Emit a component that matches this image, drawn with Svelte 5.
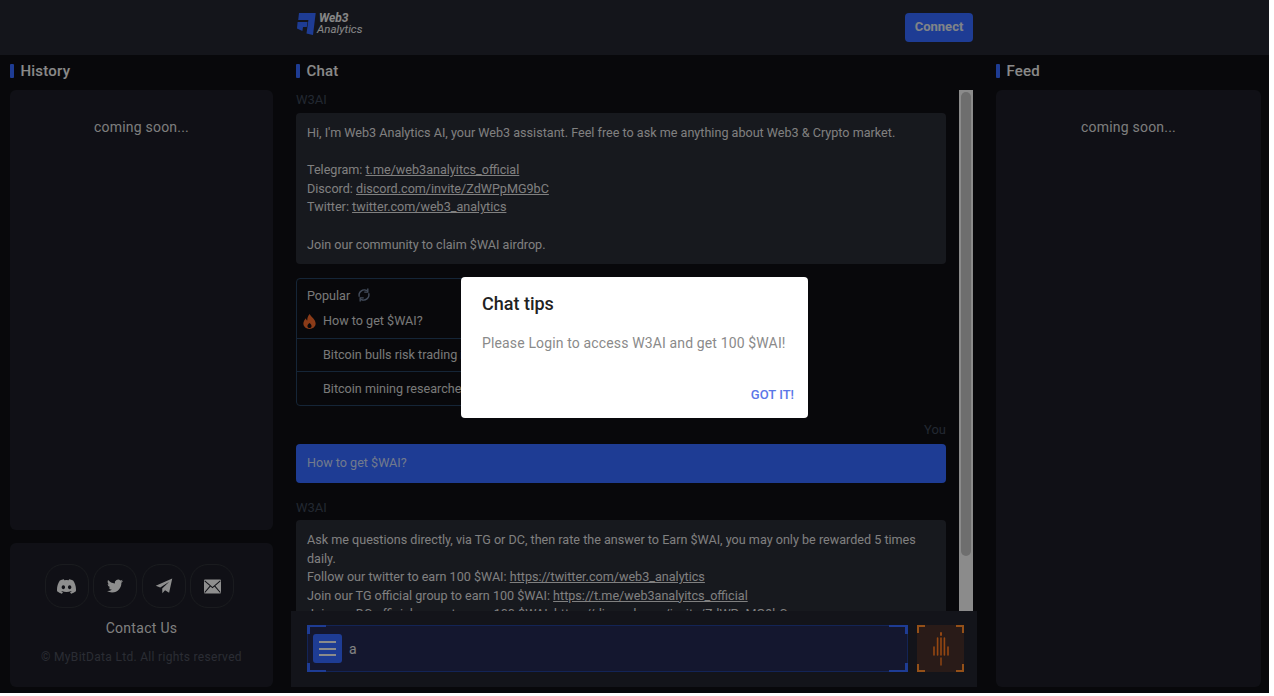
<script lang="ts">
	const popular = ['How to get $WAI?', 'Bitcoin bulls risk trading in the new range', 'Bitcoin mining researchers see profit drop'];
	const socials = ['discord', 'twitter', 'telegram', 'mail'];
</script>

<div class="shell">
	<header class="topbar">
		<a class="logo" href="#top">
			<svg class="logo-mark" viewBox="0 0 19 22" width="19" height="22">
				<path d="M2 0H18.7L16 22L9.5 20.5L11.4 7H1.2Z" fill="#3468ff" />
				<path d="M0.6 9H10.5L9.8 14H6L5.4 18L0 15.6Z" fill="#3468ff" />
			</svg>
			<span class="logo-text"><b>Web3</b><i>Analytics</i></span>
		</a>
		<button class="connect">Connect</button>
	</header>

	<main class="columns">
		<section class="col">
			<h2 class="title">History</h2>
			<div class="panel history"><p class="soon">coming soon...</p></div>
			<div class="panel contact">
				<div class="socials">
					{#each socials as s}
						<span class="social">
							{#if s === 'discord'}
								<svg viewBox="0 0 24 24" width="19" height="19"><path fill="#f4f4f4" d="M20.317 4.37a19.791 19.791 0 0 0-4.885-1.515.074.074 0 0 0-.079.037c-.21.375-.444.864-.608 1.25a18.27 18.27 0 0 0-5.487 0 12.64 12.64 0 0 0-.617-1.25.077.077 0 0 0-.079-.037A19.736 19.736 0 0 0 3.677 4.37a.07.07 0 0 0-.032.027C.533 9.046-.32 13.58.099 18.057a.082.082 0 0 0 .031.057 19.9 19.9 0 0 0 5.993 3.03.078.078 0 0 0 .084-.028 14.09 14.09 0 0 0 1.226-1.994.076.076 0 0 0-.041-.106 13.107 13.107 0 0 1-1.872-.892.077.077 0 0 1-.008-.128 10.2 10.2 0 0 0 .372-.292.074.074 0 0 1 .077-.01c3.928 1.793 8.18 1.793 12.062 0a.074.074 0 0 1 .078.01c.12.098.246.198.373.292a.077.077 0 0 1-.006.127 12.299 12.299 0 0 1-1.873.892.077.077 0 0 0-.041.107c.36.698.772 1.362 1.225 1.993a.076.076 0 0 0 .084.028 19.839 19.839 0 0 0 6.002-3.03.077.077 0 0 0 .032-.054c.5-5.177-.838-9.674-3.549-13.66a.061.061 0 0 0-.031-.03zM8.02 15.33c-1.183 0-2.157-1.085-2.157-2.419 0-1.333.956-2.419 2.157-2.419 1.21 0 2.176 1.096 2.157 2.42 0 1.333-.956 2.418-2.157 2.418zm7.975 0c-1.183 0-2.157-1.085-2.157-2.419 0-1.333.955-2.419 2.157-2.419 1.21 0 2.176 1.096 2.157 2.42 0 1.333-.946 2.418-2.157 2.418z" /></svg>
							{:else if s === 'twitter'}
								<svg viewBox="0 0 24 24" width="16" height="16"><path fill="#f4f4f4" d="M23.953 4.57a10 10 0 01-2.825.775 4.958 4.958 0 002.163-2.723c-.951.555-2.005.959-3.127 1.184a4.92 4.92 0 00-8.384 4.482C7.69 8.095 4.067 6.13 1.64 3.162a4.822 4.822 0 00-.666 2.475c0 1.71.87 3.213 2.188 4.096a4.904 4.904 0 01-2.228-.616v.06a4.923 4.923 0 003.946 4.827 4.996 4.996 0 01-2.212.085 4.936 4.936 0 004.604 3.417 9.867 9.867 0 01-6.102 2.105c-.39 0-.779-.023-1.17-.067a13.995 13.995 0 007.557 2.209c9.053 0 13.998-7.496 13.998-13.985 0-.21 0-.42-.015-.63A9.935 9.935 0 0024 4.59z" /></svg>
							{:else if s === 'telegram'}
								<svg viewBox="0 0 24 24" width="18" height="18"><path fill="#f4f4f4" d="M23 2L1 11.5L7 14L19 6.2L9.6 15.2L9.8 21.5L13.4 17.6L18.8 21Z" /></svg>
							{:else}
								<svg viewBox="0 0 24 20" width="17" height="15"><rect width="24" height="20" rx="1.5" fill="#f4f4f4" /><path d="M1 2L12 11.5L23 2M1 18.5L9 9M23 18.5L15 9" stroke="#1c1d26" stroke-width="1.5" fill="none" /></svg>
							{/if}
						</span>
					{/each}
				</div>
				<p class="contact-us">Contact Us</p>
				<p class="copyright">© MyBitData Ltd. All rights reserved</p>
			</div>
		</section>

		<section class="col chat">
			<h2 class="title">Chat</h2>
			<div class="chat-body">
				<div class="scroll">
					<p class="who">W3AI</p>
					<div class="msg">
						Hi, I'm Web3 Analytics AI, your Web3 assistant. Feel free to ask me anything about Web3 &amp; Crypto market.<br /><br />
						Telegram: <a href="#top">t.me/web3analyitcs_official</a><br />
						Discord: <a href="#top">discord.com/invite/ZdWPpMG9bC</a><br />
						Twitter: <a href="#top">twitter.com/web3_analytics</a><br /><br />
						Join our community to claim $WAI airdrop.
					</div>

					<div class="popular">
						<div class="popular-head">
							Popular
							<svg viewBox="0 0 24 24" width="14" height="14" fill="none" stroke="#74849f" stroke-width="2.4">
								<path d="M4 15A9 9 0 0 1 17 4.5" />
								<path d="M20 9A9 9 0 0 1 7 19.5" />
								<path d="M18.5 1V7H12.5" />
								<path d="M5.5 23V17H11.5" />
							</svg>
						</div>
						{#each popular as q, i}
							<div class="popular-row" class:first={i === 0}>
								{#if i === 0}
									<svg class="flame" viewBox="0 0 14 16" width="13" height="15">
										<path fill-rule="evenodd" fill="#f0662a" d="M7.4 0C8 2.8 13.6 5.4 13.6 10.2C13.6 13.6 10.6 16 7 16C3.4 16 .4 13.6 .4 10.2C.4 7.6 2 5.6 3.2 4.4C3.4 5.8 3.8 6.6 4.6 7C4.4 4.4 5.4 1.6 7.4 0ZM7 9.6C5.6 10.8 4.8 11.8 4.8 13C4.8 14.2 5.8 15 7 15C8.2 15 9.2 14.2 9.2 13C9.2 11.8 8.4 10.8 7 9.6Z" />
									</svg>
								{/if}
								{q}
							</div>
						{/each}
					</div>

					<p class="who you">You</p>
					<div class="msg mine">How to get $WAI?</div>

					<p class="who answer">W3AI</p>
					<div class="msg reply">
						Ask me questions directly, via TG or DC, then rate the answer to Earn $WAI, you may only be rewarded 5 times daily.<br />
						Follow our twitter to earn 100 $WAI: <a href="#top">https://twitter.com/web3_analytics</a><br />
						Join our TG official group to earn 100 $WAI: <a href="#top">https://t.me/web3analyitcs_official</a><br />
						Join our DC official group to earn 100 $WAI: <a href="#top">https://discord.com/invite/ZdWPpMG9bC</a><br />
						Invite friends to earn more $WAI.
					</div>
				</div>
				<div class="bar"><div class="thumb"></div></div>
			</div>

			<div class="composer">
				<div class="input">
					<i class="corner tl"></i><i class="corner tr"></i><i class="corner bl"></i><i class="corner br"></i>
					<span class="menu"><b></b><b></b><b></b></span>
					<span class="typed">a</span>
				</div>
				<div class="mic">
					<i class="corner tl"></i><i class="corner tr"></i><i class="corner bl"></i><i class="corner br"></i>
					<svg viewBox="0 0 16 34" width="16" height="34" stroke="#ff7a1f" stroke-linecap="round" fill="none">
						<path stroke-width="2" d="M8 1V3" />
						<path stroke-width="1.6" d="M1 15V23M4.6 6V23M8 6V23M11.4 6V23M15 15V23" />
						<path stroke-width="1.4" d="M8 26V33" />
					</svg>
				</div>
			</div>
		</section>

		<section class="col">
			<h2 class="title">Feed</h2>
			<div class="panel feed"><p class="soon">coming soon...</p></div>
		</section>
	</main>

	<div class="overlay">
		<div class="dialog" role="dialog">
			<h3>Chat tips</h3>
			<p>Please Login to access W3AI and get 100 $WAI!</p>
			<div class="actions"><button>GOT IT!</button></div>
		</div>
	</div>
</div>

<style>
	:global(body) {
		background: #fff;
		font-family: Roboto, "Liberation Sans", sans-serif;
	}

	.shell {
		position: relative;
		display: flex;
		flex-direction: column;
		width: 1269px;
		height: 693px;
		overflow: hidden;
		background: #0e0f13;
		color: #e4e4e4;
	}

	.topbar {
		flex: none;
		display: flex;
		align-items: center;
		justify-content: space-between;
		height: 55px;
		padding: 0 296px 0 297px;
		box-sizing: border-box;
		background: #232530;
	}

	.logo {
		display: flex;
		align-items: center;
		gap: 0;
		margin-top: -7px;
		color: #e8e8e8;
		text-decoration: none;
	}

	.logo-text {
		display: flex;
		flex-direction: column;
		margin-left: 1px;
		font-size: 11.5px;
		line-height: 11px;
		font-style: italic;
	}

	.logo-text b {
		margin-left: 2px;
		font-size: 12px;
		font-weight: 700;
	}

	.connect {
		width: 68px;
		height: 29px;
		margin-top: -1px;
		padding: 0 0 2px;
		border: 0;
		border-radius: 4px;
		background: #3468ff;
		color: #dfe2ea;
		font: 700 13px Roboto, sans-serif;
	}

	.columns {
		flex: 1;
		min-height: 0;
		display: grid;
		grid-template-columns: 263px 687px 265px;
		column-gap: 18px;
		padding: 0 0 6px 10px;
	}

	.col {
		display: flex;
		flex-direction: column;
		min-height: 0;
	}

	.title {
		flex: none;
		display: flex;
		align-items: center;
		height: 35px;
		margin: 0;
		padding-bottom: 3px;
		box-sizing: border-box;
		font-size: 15px;
		font-weight: 500;
		letter-spacing: 0.2px;
		color: #ececec;
	}

	.title::before {
		content: '';
		width: 3.5px;
		height: 14px;
		margin-right: 7px;
		border-radius: 1px;
		background: #3468ff;
	}

	.chat .title {
		padding-left: 5px;
	}

	.panel {
		border-radius: 6px;
		background: #1c1d26;
	}

	.history {
		height: 440px;
		margin-bottom: 13px;
	}

	.feed {
		flex: 1;
	}

	.soon {
		margin: 28px 0 0;
		text-align: center;
		font-size: 14px;
		line-height: 18px;
		letter-spacing: 0.2px;
		color: #d8d8d8;
	}

	.contact {
		flex: 1;
		display: flex;
		flex-direction: column;
		align-items: center;
		padding-top: 21px;
		box-sizing: border-box;
	}

	.socials {
		display: flex;
		gap: 4.5px;
		margin-left: -4px;
	}

	.social {
		display: flex;
		align-items: center;
		justify-content: center;
		width: 44px;
		height: 44px;
		box-sizing: border-box;
		border: 1px solid #2e3036;
		border-radius: 18px;
	}

	.contact-us {
		margin: 11px 0 0;
		font-size: 14px;
		line-height: 18px;
		letter-spacing: 0.3px;
		color: #dcdcdc;
	}

	.copyright {
		margin: 12px 0 0;
		font-size: 12px;
		line-height: 16px;
		letter-spacing: 0.3px;
		color: #4a4d5a;
	}

	.chat-body {
		flex: none;
		display: flex;
		height: 521px;
		margin-right: 5px;
	}

	.scroll {
		flex: 1;
		min-width: 0;
		padding: 1px 0 0 5px;
		overflow: hidden;
		box-sizing: border-box;
	}

	.bar {
		flex: none;
		width: 14px;
		padding: 2px;
		box-sizing: border-box;
		background: #f0f0f0;
	}

	.thumb {
		height: 464px;
		border-radius: 5px;
		background: #bdbdbd;
	}

	.who {
		margin: 0;
		width: 650px;
		font-size: 13px;
		line-height: 18px;
		color: #3c4556;
	}

	.who.you {
		margin-top: 15px;
		text-align: right;
	}

	.who.answer {
		margin-top: 16px;
	}

	.msg {
		width: 650px;
		margin-top: 4px;
		padding: 11px 11px 9.8px;
		box-sizing: border-box;
		border-radius: 4px;
		background: #292b34;
		font-size: 12.6px;
		line-height: 18.6px;
		color: #dcdcdc;
	}

	.msg.reply {
		margin-top: 3px;
	}

	.msg a {
		color: inherit;
	}

	.msg.mine {
		height: 39px;
		margin-top: 5px;
		padding-top: 10px;
		background: #3468ff;
		color: #c4d2f2;
	}

	.popular {
		width: 330px;
		margin-top: 14px;
		box-sizing: border-box;
		border: 1px solid #25405f;
		border-radius: 4px;
		font-size: 12.6px;
		color: #d0d0d0;
	}

	.popular-head {
		display: flex;
		align-items: center;
		gap: 7px;
		height: 32px;
		padding: 1px 10px 0;
		box-sizing: border-box;
	}

	.popular-row {
		position: relative;
		height: 33px;
		padding-left: 26px;
		line-height: 32px;
		white-space: nowrap;
		box-sizing: border-box;
		border-top: 1px solid #25405f;
	}

	.popular-row:last-child {
		height: 34px;
		line-height: 33px;
	}

	.popular-row.first {
		height: 27px;
		border-top: 0;
		line-height: 20px;
	}

	.flame {
		position: absolute;
		left: 6px;
		top: 3px;
	}

	.composer {
		flex: 1;
		display: flex;
		gap: 9px;
		margin-right: 1px;
		padding: 14px 13px 15px 16px;
		box-sizing: border-box;
		background: #22242d;
	}

	.input,
	.mic {
		position: relative;
		box-sizing: border-box;
	}

	.input {
		flex: 1;
		display: flex;
		align-items: center;
		gap: 7px;
		padding-left: 5px;
		border: 1px solid #223e94;
		background: #242952;
	}

	.mic {
		flex: none;
		display: flex;
		align-items: center;
		justify-content: center;
		width: 47px;
		background: #48302a;
	}

	.corner {
		position: absolute;
		width: 16px;
		height: 7px;
		border: 0 solid #3468ff;
	}

	.tl { left: -1px; top: -1px; border-width: 2px 0 0 3px; }
	.tr { right: -1px; top: -1px; border-width: 2px 3px 0 0; }
	.bl { left: -1px; bottom: -1px; border-width: 0 0 2px 3px; }
	.br { right: -1px; bottom: -1px; border-width: 0 3px 2px 0; }

	.mic .corner {
		width: 6px;
		height: 6px;
		border-color: #ff8a2a;
		border-width: 0;
	}

	.mic .tl { left: 0; top: 0; border-width: 2px 0 0 2px; }
	.mic .tr { right: 0; top: 0; border-width: 2px 2px 0 0; }
	.mic .bl { left: 0; bottom: 0; border-width: 0 0 2px 2px; }
	.mic .br { right: 0; bottom: 0; border-width: 0 2px 2px 0; }

	.menu {
		display: flex;
		flex-direction: column;
		justify-content: center;
		gap: 4.5px;
		width: 29px;
		height: 29px;
		padding: 0 6px;
		box-sizing: border-box;
		border-radius: 3px;
		background: #3468ff;
	}

	.menu b {
		height: 2px;
		background: #f0f0f0;
	}

	.typed {
		font-size: 14px;
		color: #e0e0e0;
	}

	.overlay {
		position: absolute;
		inset: 0;
		display: flex;
		align-items: center;
		justify-content: center;
		background: rgba(0, 0, 0, 0.42);
	}

	.dialog {
		width: 347px;
		height: 141px;
		margin-top: 2px;
		padding: 15px 14px 0 21px;
		box-sizing: border-box;
		border-radius: 4px;
		background: #fff;
	}

	.dialog h3 {
		margin: 0;
		font-size: 18px;
		line-height: 24px;
		font-weight: 500;
		color: #222;
	}

	.dialog p {
		margin: 16px 0 0;
		font-size: 14px;
		line-height: 22px;
		letter-spacing: 0.14px;
		color: #8a8a8a;
	}

	.actions {
		display: flex;
		justify-content: flex-end;
		margin-top: 33px;
	}

	.actions button {
		padding: 0;
		border: 0;
		background: none;
		font: 500 13px Roboto, sans-serif;
		color: #5a76e8;
	}
</style>
